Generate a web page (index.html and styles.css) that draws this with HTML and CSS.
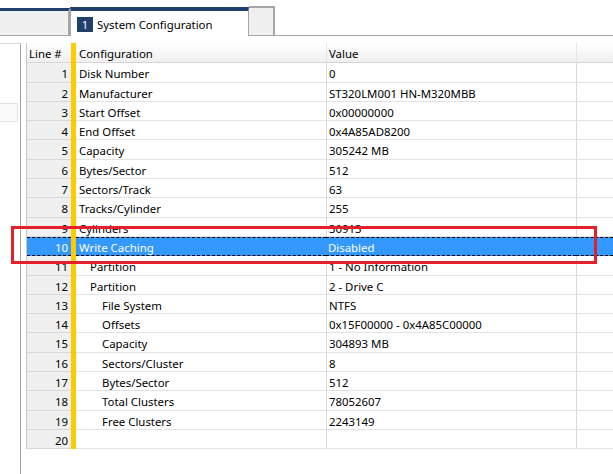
FILE: index.html
```html
<!DOCTYPE html>
<html>
<head>
<meta charset="utf-8">
<link rel="stylesheet" href="styles.css">
</head>
<body>
<div class="app">
  <div class="tabbar">
    <div class="tab tab-left"></div>
    <div class="tab tab-active"><span class="badge">1</span><span class="tab-title">System Configuration</span></div>
    <div class="tab tab-extra"></div>
    <div class="tab-fill"></div>
  </div>
  <div class="main">
    <div class="side"><div class="side-item"></div></div>
    <div class="grid">
      <div class="row head"><div class="c-num">Line #</div><div class="c-bar"></div><div class="c-cfg">Configuration</div><div class="c-val">Value</div><div class="c-end"></div></div>
      <div class="row"><div class="c-num">1</div><div class="c-bar"></div><div class="c-cfg">Disk Number</div><div class="c-val">0</div><div class="c-end"></div></div>
      <div class="row"><div class="c-num">2</div><div class="c-bar"></div><div class="c-cfg">Manufacturer</div><div class="c-val">ST320LM001 HN-M320MBB</div><div class="c-end"></div></div>
      <div class="row"><div class="c-num">3</div><div class="c-bar"></div><div class="c-cfg">Start Offset</div><div class="c-val">0x00000000</div><div class="c-end"></div></div>
      <div class="row"><div class="c-num">4</div><div class="c-bar"></div><div class="c-cfg">End Offset</div><div class="c-val">0x4A85AD8200</div><div class="c-end"></div></div>
      <div class="row"><div class="c-num">5</div><div class="c-bar"></div><div class="c-cfg">Capacity</div><div class="c-val">305242 MB</div><div class="c-end"></div></div>
      <div class="row"><div class="c-num">6</div><div class="c-bar"></div><div class="c-cfg">Bytes/Sector</div><div class="c-val">512</div><div class="c-end"></div></div>
      <div class="row"><div class="c-num">7</div><div class="c-bar"></div><div class="c-cfg">Sectors/Track</div><div class="c-val">63</div><div class="c-end"></div></div>
      <div class="row"><div class="c-num">8</div><div class="c-bar"></div><div class="c-cfg">Tracks/Cylinder</div><div class="c-val">255</div><div class="c-end"></div></div>
      <div class="row"><div class="c-num">9</div><div class="c-bar"></div><div class="c-cfg">Cylinders</div><div class="c-val">30913</div><div class="c-end"></div></div>
      <div class="row selected"><div class="c-num">10</div><div class="c-bar"></div><div class="c-cfg">Write Caching</div><div class="c-val">Disabled</div><div class="c-end"></div></div>
      <div class="row"><div class="c-num">11</div><div class="c-bar"></div><div class="c-cfg lvl1">Partition</div><div class="c-val">1 - No Information</div><div class="c-end"></div></div>
      <div class="row"><div class="c-num">12</div><div class="c-bar"></div><div class="c-cfg lvl1">Partition</div><div class="c-val">2 - Drive C</div><div class="c-end"></div></div>
      <div class="row"><div class="c-num">13</div><div class="c-bar"></div><div class="c-cfg lvl2">File System</div><div class="c-val">NTFS</div><div class="c-end"></div></div>
      <div class="row"><div class="c-num">14</div><div class="c-bar"></div><div class="c-cfg lvl2">Offsets</div><div class="c-val">0x15F00000 - 0x4A85C00000</div><div class="c-end"></div></div>
      <div class="row"><div class="c-num">15</div><div class="c-bar"></div><div class="c-cfg lvl2">Capacity</div><div class="c-val">304893 MB</div><div class="c-end"></div></div>
      <div class="row"><div class="c-num">16</div><div class="c-bar"></div><div class="c-cfg lvl2">Sectors/Cluster</div><div class="c-val">8</div><div class="c-end"></div></div>
      <div class="row"><div class="c-num">17</div><div class="c-bar"></div><div class="c-cfg lvl2">Bytes/Sector</div><div class="c-val">512</div><div class="c-end"></div></div>
      <div class="row"><div class="c-num">18</div><div class="c-bar"></div><div class="c-cfg lvl2">Total Clusters</div><div class="c-val">78052607</div><div class="c-end"></div></div>
      <div class="row"><div class="c-num">19</div><div class="c-bar"></div><div class="c-cfg lvl2">Free Clusters</div><div class="c-val">2243149</div><div class="c-end"></div></div>
      <div class="row"><div class="c-num">20</div><div class="c-bar"></div><div class="c-cfg"></div><div class="c-val"></div><div class="c-end"></div></div>
    </div>
  </div>
  <div class="callout"></div>
</div>
</body>
</html>
```
FILE: styles.css
```css
* { box-sizing: border-box; }
html, body { margin: 0; padding: 0; background: #fff; }
body {
  font-family: "Noto Sans", "Open Sans", sans-serif;
  font-size: 11.4px;
  color: #000;
  width: 613px;
  height: 474px;
  overflow: hidden;
}
.app { position: relative; width: 613px; height: 474px; }

/* tab bar */
.tabbar { display: flex; align-items: flex-end; height: 36px; }
.tab-left {
  width: 70px; height: 28px;
  background: #f0f0f0;
  border-top: 3px solid #22406c;
  border-right: 2px solid #a6a6a6;
  border-bottom: 1px solid #a6a6a6;
}
.tab-active {
  width: 179px; height: 29px;
  background: #fff;
  border-top: 4px solid #22406c;
  border-left: 1px solid #a6a6a6;
  border-right: 1px solid #a6a6a6;
  display: flex; align-items: center;
  padding-left: 6px;
  font-size: 11.4px;
}
.badge {
  display: inline-flex; align-items: center; justify-content: center;
  width: 16px; height: 15px;
  background: #22406c; color: #fff;
  margin-right: 4px;
  margin-top: 1px;
}
.tab-title { margin-top: 1px; }
.tab-extra {
  width: 26px; height: 30px;
  background: #f0f0f0;
  border-top: 2px solid #a6a6a6;
  border-right: 2px solid #a6a6a6;
  border-bottom: 1px solid #a6a6a6;
}
.tab-fill { flex: 1; height: 1px; background: #a6a6a6; }

/* main */
.main { display: flex; gap: 5px; padding-top: 7px; height: 438px; }
.side {
  width: 21px;
  border-top: 1px solid #dadada;
  border-right: 1px solid #a0a0a0;
  padding-top: 59px;
}
.side-item {
  width: 18px; height: 19px;
  background: #fafafa;
  border: 1px solid #e0e0e0;
  border-left: none;
}
.grid {
  flex: 1;
  align-self: flex-start;
  border-left: 1px solid #c8c8c8;
}
.row {
  display: grid;
  grid-template-columns: 44px 5px 250px 250px 1fr;
  height: 19.3px;
  line-height: 21px;
}
.row > div { border-bottom: 1px solid #e2e2e2; white-space: nowrap; overflow: hidden; }
.row > .c-bar { background: #fccb00; border-bottom: none; }
.c-num { background: #f0f0f0; text-align: right; padding-right: 3px; border-bottom-color: #d8d8d8 !important; }
.c-cfg { padding-left: 3px; }
.c-cfg.lvl1 { padding-left: 14px; }
.c-cfg.lvl2 { padding-left: 26px; }
.c-val { padding-left: 2px; border-left: 1px solid #dadada; }
.c-end { border-left: 1px solid #dadada; }

.row.head { height: 20.3px; line-height: 22px; }
.row.head > div { background: linear-gradient(#ffffff, #f0f0f0); border-bottom: 1px solid #d4d4d4; }
.row.head > .c-bar { background: #fccb00; border-bottom: none; }
.row.head > .c-num { text-align: left; padding-left: 2px; padding-right: 0; }
.row.head > .c-val, .row.head > .c-end { border-left-color: #e6e6e6; }

.row.selected > div {
  background: #3399ff;
  color: #fff;
  border-top: 1px dashed #000;
  border-bottom: 1px dashed #000 !important;
  border-left: none;
  line-height: 19px;
}
.row.selected > .c-bar { background: #fccb00; border-top: none; border-bottom: none !important; }

/* annotation */
.callout {
  position: absolute;
  left: 11px; top: 226px;
  width: 586px; height: 38px;
  border: 3px solid #e5202b;
  pointer-events: none;
}
```
